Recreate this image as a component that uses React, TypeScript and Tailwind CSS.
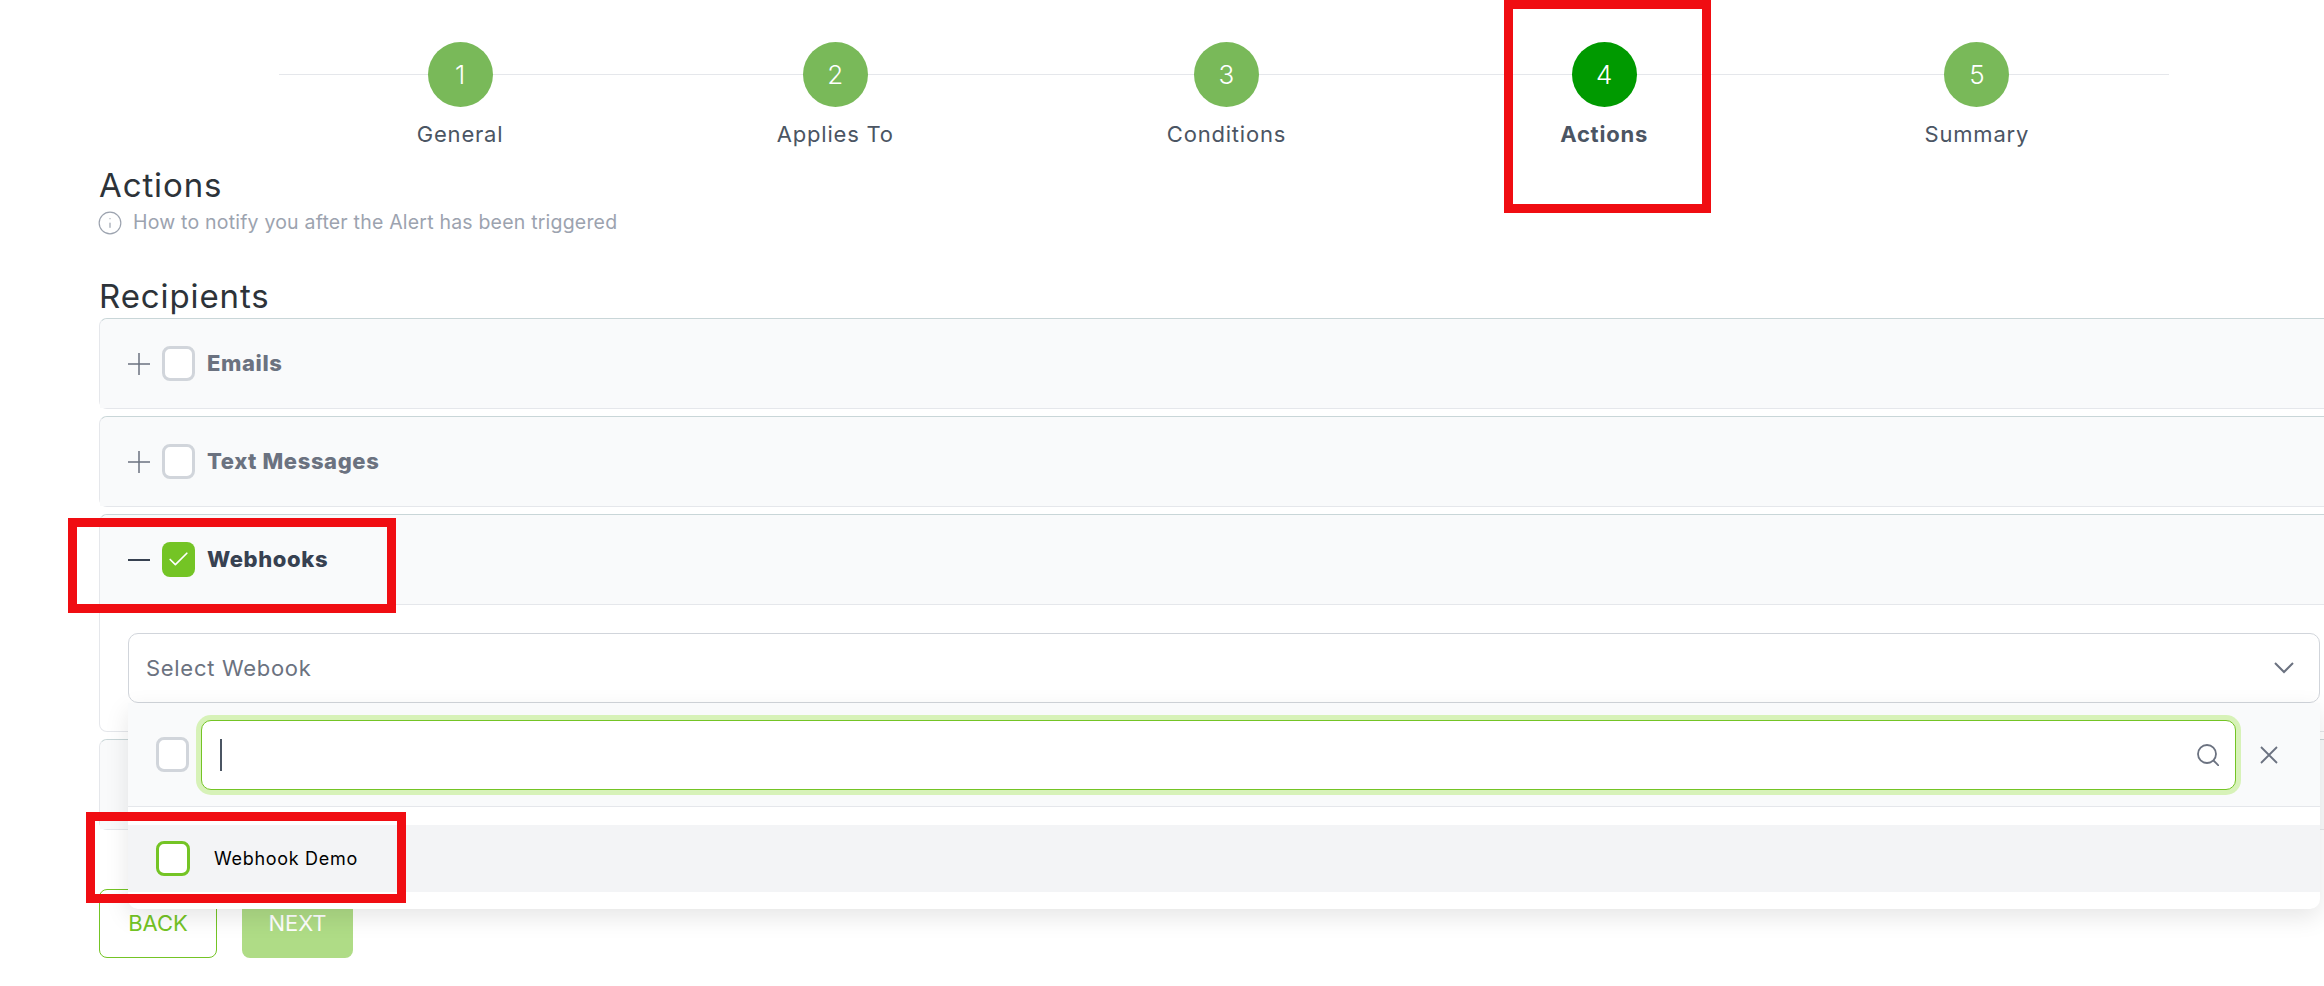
import { Check, Info } from "lucide-react";

const font = "font-['Inter','Open_Sans',sans-serif]";

const STEPS = [
  { n: 1, label: "General", width: "w-[88px]" },
  { n: 2, label: "Applies To", width: "w-[114px]" },
  { n: 3, label: "Conditions", width: "w-[120px]" },
  { n: 4, label: "Actions", width: "w-[87px]", active: true },
  { n: 5, label: "Summary", width: "w-[110px]" },
];

function Box({ variant = "idle" }: { variant?: "idle" | "checked" | "hover" }) {
  if (variant === "checked") {
    return (
      <span className="w-[33px] h-[35px] rounded-[8px] bg-[#74c425] flex items-center justify-center shrink-0">
        <Check size={25} strokeWidth={1.6} className="text-white" />
      </span>
    );
  }
  return (
    <span
      className={
        variant === "hover"
          ? "w-[34px] h-[35px] rounded-[8px] bg-white border-[3px] border-[#74c425] shrink-0"
          : "w-[33px] h-[35px] rounded-[8px] bg-white border-[3px] border-[#d1d5db] shrink-0"
      }
    />
  );
}

function PanelHead({ title, open }: { title: string; open?: boolean }) {
  return (
    <div className="h-[89px] flex items-center pl-[28px] bg-[#f9fafb] rounded-t-[8px]">
      {open ? (
        <svg viewBox="0 0 22 22" className="w-[22px] h-[22px] text-[#374151] mr-[12px]" fill="none" stroke="currentColor" strokeWidth="2">
          <path d="M0 11h22" />
        </svg>
      ) : (
        <svg viewBox="0 0 22 22" className="w-[22px] h-[22px] text-[#6b7280] mr-[12px]" fill="none" stroke="currentColor" strokeWidth="1.5">
          <path d="M11 0v22M0 11h22" />
        </svg>
      )}
      <Box variant={open ? "checked" : "idle"} />
      <span
        className={
          open
            ? "ml-[12px] text-[22px] tracking-[0.6px] font-extrabold text-[#374151]"
            : "ml-[12px] text-[22px] tracking-[0.6px] font-extrabold text-[#6b7280]"
        }
      >
        {title}
      </span>
    </div>
  );
}

export default function App() {
  return (
    <div className={`relative w-full h-[986px] overflow-hidden bg-white ${font}`}>
      <div className="relative ml-[279px] w-[1890px] pt-[42px]">
        <div className="absolute left-0 right-0 top-[74px] h-px bg-[#e5e7eb]" />
        <div className="relative flex justify-around">
          {STEPS.map((s) => (
            <div key={s.n} className={`flex flex-col items-center ${s.width}`}>
              <div
                className={
                  s.active
                    ? "w-[65px] h-[65px] rounded-full bg-[#009a00] text-white text-[26px] font-light flex items-center justify-center"
                    : "w-[65px] h-[65px] rounded-full bg-[#79b959] text-white text-[26px] font-light flex items-center justify-center"
                }
              >
                {s.n}
              </div>
              <div
                className={
                  s.active
                    ? "mt-[12px] mb-[1px] text-[22px] tracking-[0.8px] leading-[30px] font-bold text-[#4b5563] whitespace-nowrap"
                    : "mt-[12px] mb-[1px] text-[22px] tracking-[0.8px] leading-[30px] text-[#4b5563] whitespace-nowrap"
                }
              >
                {s.label}
              </div>
            </div>
          ))}
        </div>
      </div>

      <div className="pl-[99px]">
        <h1 className="mt-[13px] text-[33px] tracking-[0.9px] leading-[44px] text-[#2d3339]">Actions</h1>
        <div className="flex items-center h-[24px] mt-[4px] text-[#9ca3af]">
          <Info size={26} strokeWidth={1.1} className="shrink-0 -ml-[2px]" />
          <span className="ml-[10px] text-[19.5px] tracking-[0.2px]">How to notify you after the Alert has been triggered</span>
        </div>
        <h2 className="mt-[39px] text-[33px] tracking-[0.9px] leading-[44px] text-[#2d3339]">Recipients</h2>

        <div className="w-[2260px] flex flex-col gap-[7px]">
          <div className="border border-[#e5e7eb] border-t-[#c9d6d8] rounded-[8px] bg-[#f9fafb]">
            <PanelHead title="Emails" />
          </div>
          <div className="border border-[#e5e7eb] border-t-[#c9d6d8] rounded-[8px] bg-[#f9fafb]">
            <PanelHead title="Text Messages" />
          </div>
          <div className="border border-[#e5e7eb] border-t-[#c9d6d8] rounded-[8px] bg-white">
            <div className="border-b border-[#e5e7eb]">
              <PanelHead title="Webhooks" open />
            </div>
            <div className="pl-[28px] pt-[28px] pb-[28px]">
              <div className="w-[2192px] h-[70px] border border-[#d1d5db] rounded-[10px] flex items-center justify-between pl-[17px] pr-[25px]">
                <span className="text-[22px] tracking-[0.7px] text-[#6b7280]">Select Webook</span>
                <svg viewBox="0 0 20 12" className="w-[20px] h-[12px] text-[#6b7280]" fill="none" stroke="currentColor" strokeWidth="2">
                  <path d="M1 1l9 9 9-9" />
                </svg>
              </div>
            </div>
          </div>
          <div className="border border-[#e5e7eb] border-t-[#c9d6d8] rounded-[8px] bg-[#f9fafb]">
            <PanelHead title="Slack" />
          </div>
        </div>

        <div className="flex gap-[25px] mt-[59px]">
          <button className="w-[118px] h-[69px] border border-[#74c425] rounded-[8px] text-[22px] text-[#74c425] bg-white">BACK</button>
          <button className="w-[111px] h-[69px] rounded-[8px] text-[22px] text-white bg-[#afdc86]">NEXT</button>
        </div>
      </div>

      <div className="absolute left-[128px] top-[703px] w-[2192px] h-[206px] bg-white rounded-b-[10px] shadow-[0_8px_24px_rgba(0,0,0,0.1)]">
        <div className="h-[104px] bg-[#f9fafb] border-b border-[#e5e7eb] flex items-center pl-[28px]">
          <Box />
          <div className="ml-[12px] w-[2035px] h-[70px] bg-white border border-[#74c425] rounded-[10px] ring-[5px] ring-[#d7f2b8] flex items-center justify-between pl-[18px] pr-[16px]">
            <span className="w-[2px] h-[32px] bg-[#4b5563]" />
            <svg viewBox="0 0 22 22" className="w-[22px] h-[22px] text-[#6b7280]" fill="none" stroke="currentColor" strokeWidth="1.8">
              <circle cx="10" cy="10" r="9" />
              <path d="M16.5 16.5L22 22" />
            </svg>
          </div>
          <svg viewBox="0 0 18 18" className="ml-[24px] w-[18px] h-[18px] text-[#6b7280]" fill="none" stroke="currentColor" strokeWidth="1.8">
            <path d="M1 1l16 16M17 1L1 17" />
          </svg>
        </div>
        <div className="mt-[18px] h-[67px] bg-[#f3f4f6] flex items-center pl-[28px]">
          <Box variant="hover" />
          <span className="ml-[24px] text-[18px] tracking-[0.7px] text-black">Webhook Demo</span>
        </div>
      </div>

      <div className="absolute left-[1504px] top-0 w-[207px] h-[213px] border-[9px] border-[#f00d12]" />
      <div className="absolute left-[68px] top-[518px] w-[328px] h-[95px] border-[9px] border-[#f00d12]" />
      <div className="absolute left-[86px] top-[812px] w-[320px] h-[91px] border-[9px] border-[#f00d12]" />
    </div>
  );
}
